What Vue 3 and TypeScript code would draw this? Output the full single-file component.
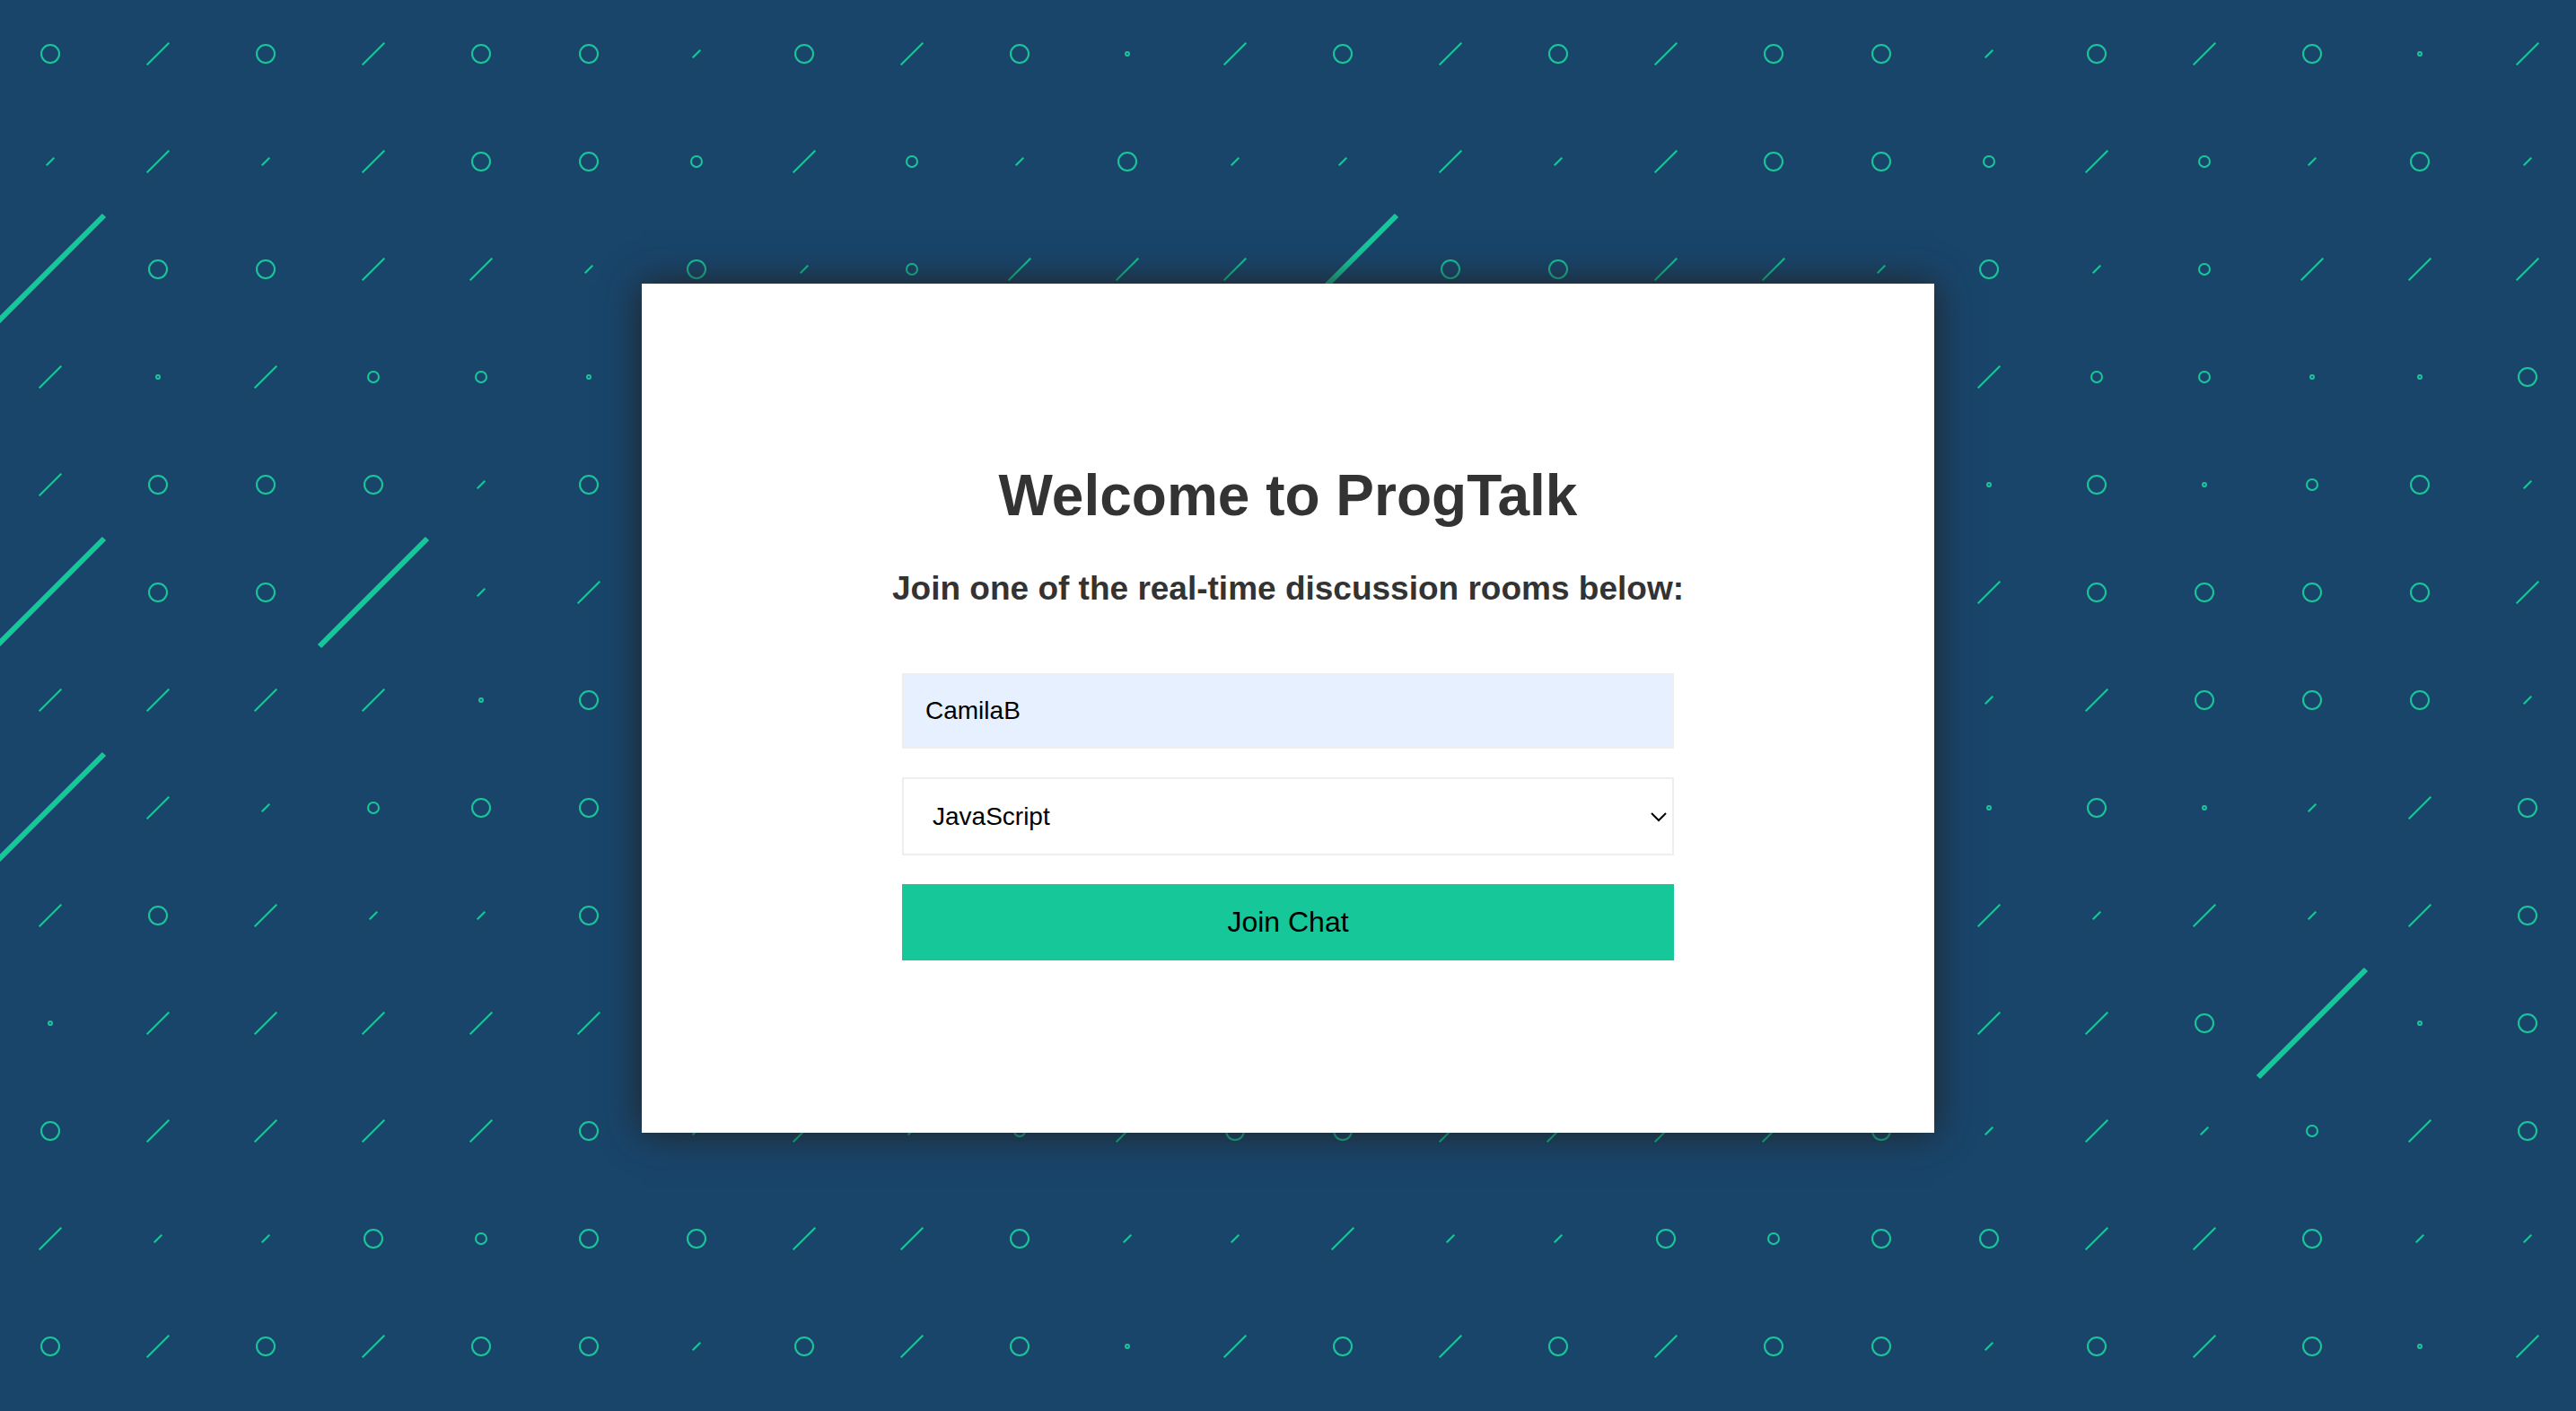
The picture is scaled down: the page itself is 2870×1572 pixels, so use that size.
<script setup lang="ts">
import { ref } from 'vue'

type Shape = 'ring' | 'ring-mid' | 'dot' | 'slash' | 'slash-short' | 'slash-long'

interface Mark {
  id: string
  x: number
  y: number
  shape: Shape
}

const cell = 120

const shapes: Record<string, Shape> = {
  O: 'ring',
  o: 'ring-mid',
  '.': 'dot',
  '/': 'slash',
  '-': 'slash-short',
  X: 'slash-long',
}

// One repeat of the backdrop, a character for each cell
const rows = [
  'O / O / O O - O / O . /',
  '- / - / O O o / o - O -',
  'X O O / / - O - o / / /',
  '/ . / o o . / o o . . O',
  '/ O O O - O . O . o O -',
  'X O O X - / / O O O O /',
  '/ / / / . O - / O O O -',
  'X / - o O O . O . - / O',
  '/ O / - - O / - / - / O',
  '. / / / / / / / O X . O',
  'O / / / / O - / - o / O',
  '/ - - O o O O / / O - -',
]

const marks: Mark[] = rows.flatMap((row, r) =>
  row.split(' ').map((char, c) => ({
    id: `${r}-${c}`,
    x: 56 + c * cell,
    y: 60 + r * cell,
    shape: shapes[char],
  })),
)

const radius: Partial<Record<Shape, number>> = { ring: 10, 'ring-mid': 6, dot: 2 }
const reach: Partial<Record<Shape, number>> = { slash: 12.3, 'slash-short': 4.3, 'slash-long': 60 }

const rings = marks.filter((m) => radius[m.shape] !== undefined)
const slashes = marks.filter((m) => reach[m.shape] !== undefined)

const topics = ['JavaScript', 'Python', 'PHP', 'C#', 'Ruby', 'Java']

const username = ref('CamilaB')
const room = ref('JavaScript')
</script>

<template>
  <div class="page">
    <svg class="backdrop" aria-hidden="true">
      <defs>
        <pattern id="marks" width="1440" height="1440" patternUnits="userSpaceOnUse">
          <circle
            v-for="m in rings"
            :key="m.id"
            class="mark"
            :cx="m.x"
            :cy="m.y"
            :r="radius[m.shape]"
          />
          <line
            v-for="m in slashes"
            :key="m.id"
            class="mark"
            :class="{ bold: m.shape === 'slash-long' }"
            :x1="m.x - reach[m.shape]!"
            :y1="m.y + reach[m.shape]!"
            :x2="m.x + reach[m.shape]!"
            :y2="m.y - reach[m.shape]!"
          />
        </pattern>
      </defs>
      <rect width="100%" height="100%" fill="url(#marks)" />
    </svg>

    <main class="card">
      <h1>Welcome to ProgTalk</h1>
      <h3>Join one of the real-time discussion rooms below:</h3>
      <form class="form" @submit.prevent>
        <input v-model="username" class="field" type="text" name="username" aria-label="Username" />
        <div class="select">
          <select v-model="room" class="field" name="room" aria-label="Room">
            <option v-for="t in topics" :key="t" :value="t">{{ t }}</option>
          </select>
          <svg class="chevron" width="18" height="12" viewBox="0 0 18 12" aria-hidden="true">
            <path d="M1 2 L9 10 L17 2" />
          </svg>
        </div>
        <button class="join" type="submit">Join Chat</button>
      </form>
    </main>
  </div>
</template>

<style>
body {
  margin: 0;
  background: #19456b;
}
</style>

<style scoped>
.page {
  display: grid;
  grid-template-columns: minmax(0, 1fr);
  min-height: 100vh;
  background: #19456b;
  font-family: 'Liberation Sans', Arial, sans-serif;
  color: #333;
}

.backdrop {
  grid-area: 1 / 1;
  width: 100%;
  height: 100%;
}

.mark {
  fill: none;
  stroke: #16c79a;
  stroke-width: 2;
}

.mark.bold {
  stroke-width: 6;
}

.card {
  grid-area: 1 / 1;
  place-self: center;
  box-sizing: border-box;
  display: flex;
  flex-direction: column;
  align-items: center;
  width: 100%;
  max-width: 1440px;
  margin-top: 6px;
  padding: 200px 40px 192px;
  background: #fff;
  box-shadow: 0 0 40px #222;
  text-align: center;
}

h1 {
  margin: 0;
  font-size: 64px;
  line-height: 72px;
}

h3 {
  margin: 47px 0 73px;
  font-size: 37px;
  line-height: 42px;
}

.form {
  display: flex;
  flex-direction: column;
  gap: 32px;
  width: 100%;
  max-width: 860px;
}

.field {
  box-sizing: border-box;
  width: 100%;
  height: 84px;
  padding: 0 24px;
  border: 2px solid #eee;
  border-radius: 0;
  background: #e6f0ff;
  color: #000;
  font-family: inherit;
  font-size: 28px;
}

.select {
  display: grid;
  align-items: center;
}

.select .field {
  grid-area: 1 / 1;
  height: 87px;
  padding: 0 32px;
  appearance: none;
  background: #fff;
}

.chevron {
  grid-area: 1 / 1;
  justify-self: end;
  margin-right: 8px;
  fill: none;
  stroke: #000;
  stroke-width: 2;
  pointer-events: none;
}

.join {
  height: 85px;
  padding: 0;
  border: 0;
  background: #16c79a;
  color: #000;
  font-family: inherit;
  font-size: 32px;
  cursor: pointer;
}
</style>
